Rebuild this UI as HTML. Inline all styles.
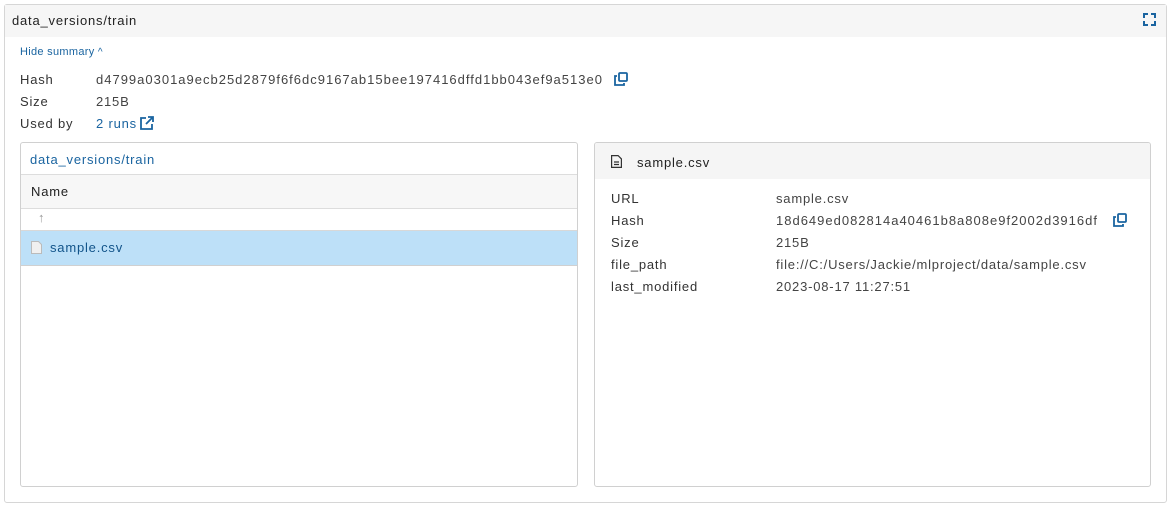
<!DOCTYPE html>
<html><head><style>
*{box-sizing:border-box;margin:0;padding:0}
body{width:1171px;height:506px;background:#fff;font-family:"Liberation Sans",sans-serif;font-size:13px;color:#333;position:relative;overflow:hidden;letter-spacing:0.8px}
.abs{position:absolute;white-space:nowrap}
.panel{position:absolute;left:4px;top:4px;width:1163px;height:499px;border:1px solid #d6d6d6;border-radius:3px}
.ph{position:absolute;left:0;top:0;right:0;height:32px;background:#f6f6f6}
.link{color:#1a64a0}
.box{position:absolute;border:1px solid #d0d0d0;border-radius:3px;overflow:hidden}
.h{letter-spacing:1px}
</style></head><body>
<div class="panel"><div class="ph"></div></div>
<div class="abs" style="left:12px;top:13px;color:#222">data_versions/train</div>
<svg class="abs" style="left:1143px;top:13px" width="13" height="13" viewBox="0 0 13 13" fill="none" stroke="#1a64a0" stroke-width="2"><path d="M1 5V1h4M8 1h4v4M12 8v4H8M5 12H1V8"/></svg>
<div class="abs link" style="left:20px;top:46px;font-size:11px;letter-spacing:0.3px">Hide summary <span style="font-size:10px">^</span></div>
<div class="abs" style="left:20px;top:72px">Hash</div>
<div class="abs h" style="left:96px;top:72px;color:#444">d4799a0301a9ecb25d2879f6f6dc9167ab15bee197416dffd1bb043ef9a513e0</div>
<svg class="abs" style="left:614px;top:72px" width="14" height="14" viewBox="0 0 14 14" fill="none" stroke="#1a64a0" stroke-width="1.8"><rect x="5" y="1" width="8" height="8" rx="1"/><path d="M3 4H1v9h9v-2"/></svg>
<div class="abs" style="left:20px;top:94px">Size</div>
<div class="abs" style="left:96px;top:94px;color:#444">215B</div>
<div class="abs" style="left:20px;top:116px">Used by</div>
<div class="abs link" style="left:96px;top:116px">2 runs</div>
<svg class="abs" style="left:140px;top:116px" width="14" height="14" viewBox="0 0 14 14" fill="none" stroke="#1a64a0" stroke-width="1.8"><path d="M6 2H1v11h11V8M8 1h5v5M13 1L6 8"/></svg>

<div class="box" style="left:20px;top:142px;width:558px;height:345px">
  <div class="abs link" style="left:9px;top:9px">data_versions/train</div>
  <div class="abs" style="left:0;top:31px;width:100%;height:35px;background:#f7f7f7;border-top:1px solid #ddd;border-bottom:1px solid #ddd"></div>
  <div class="abs" style="left:10px;top:41px;color:#222">Name</div>
  <div class="abs" style="left:17px;top:67px;color:#999;font-size:13px">↑</div>
  <div class="abs" style="left:0;top:87px;width:100%;height:36px;background:#bde0f8;border-top:1px solid #d8d8d8;border-bottom:1px solid #d0d0d0"></div>
  <svg class="abs" style="left:10px;top:98px" width="11" height="13" viewBox="0 0 11 13" fill="#f0f0f0" stroke="#bbb"><path d="M.5.5h7l3 3v9H.5z"/></svg>
  <div class="abs link" style="left:29px;top:97px;color:#12548a">sample.csv</div>
</div>

<div class="box" style="left:594px;top:142px;width:557px;height:345px">
  <div class="abs" style="left:0;top:0;width:100%;height:36px;background:#f5f5f5"></div>
  <svg class="abs" style="left:16px;top:12px" width="11" height="13" viewBox="0 0 11 13" fill="none" stroke="#333" stroke-width="1.2"><path d="M.6.6h6.5l3.3 3.3v8.5H.6z M3 7h5M3 9.5h5"/></svg>
  <div class="abs" style="left:42px;top:12px;color:#222">sample.csv</div>
</div>
<div class="abs" style="left:611px;top:191px">URL</div><div class="abs" style="left:776px;top:191px;color:#444">sample.csv</div>
<div class="abs" style="left:611px;top:213px">Hash</div><div class="abs h" style="left:776px;top:213px;color:#444">18d649ed082814a40461b8a808e9f2002d3916df</div>
<svg class="abs" style="left:1113px;top:213px" width="14" height="14" viewBox="0 0 14 14" fill="none" stroke="#1a64a0" stroke-width="1.8"><rect x="5" y="1" width="8" height="8" rx="1"/><path d="M3 4H1v9h9v-2"/></svg>
<div class="abs" style="left:611px;top:235px">Size</div><div class="abs" style="left:776px;top:235px;color:#444">215B</div>
<div class="abs" style="left:611px;top:257px">file_path</div><div class="abs" style="left:776px;top:257px;color:#444">file://C:/Users/Jackie/mlproject/data/sample.csv</div>
<div class="abs" style="left:611px;top:279px">last_modified</div><div class="abs" style="left:776px;top:279px;color:#444">2023-08-17 11:27:51</div>
</body></html>
